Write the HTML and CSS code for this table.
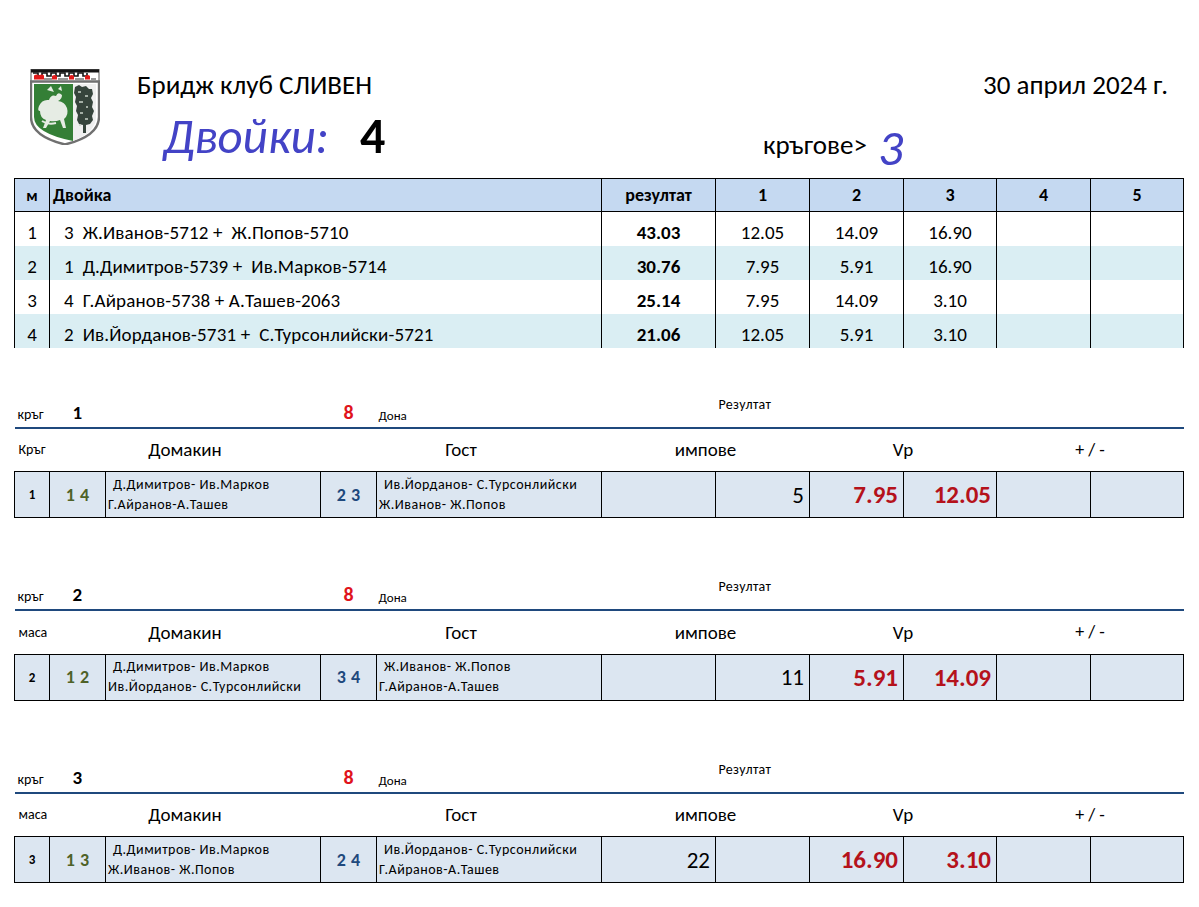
FILE: index.html
```html
<!DOCTYPE html>
<html lang="bg">
<head>
<meta charset="utf-8">
<title>Бридж клуб СЛИВЕН</title>
<link rel="stylesheet" href="styles.css">
</head>
<body>
<div class="page">
  <header class="header">
    <svg class="logo" viewBox="0 0 70 76" width="70" height="76">
      <rect x="1" y="0.5" width="68" height="12" fill="#fff" stroke="#555" stroke-width="1"/>
      <path d="M1 0.5 H69 V3.5 H1 Z" fill="#151515"/>
      <path d="M3 4 h5 v3 h4 v-3 h5 v3 h4 v-3 h5 v3 h4 v-3 h5 v3 h4 v-3 h5 v3 h4 v-3 h5 v3 h4 v-3" fill="none" stroke="#151515" stroke-width="1.6"/>
      <path d="M4 6.5 q3 -2 5 0 q3 -2 5 0 v4 h-10 z" fill="#e21b1b"/>
      <path d="M22 7 q3 -2 5 0 v3.5 h-5 z" fill="#e21b1b"/>
      <path d="M39 7 q3 -2 5 0 v3.5 h-5 z" fill="#e21b1b"/>
      <path d="M55 7 q3 -2 5 0 v3.5 h-5 z" fill="#e21b1b"/>
      <path d="M14 10 h8 M28 10 h10 M45 10 h9 M61 10 h5" stroke="#333" stroke-width="1.2"/>
      <path d="M1 12.5 H69 V48 Q69 67 35 75.5 Q1 67 1 48 Z" fill="#fff" stroke="#707070" stroke-width="2.4"/>
      <path d="M4 15 H43 V72 Q4 64 4 48 Z" fill="#347f36"/>
      <path d="M9 37 q3 -7 10 -6 q2 -6 7 -4 q2 -5 6 -1 q0 4 -4 6 q7 1 9 7 q2 7 -3 11 l2 9 h-3 l-3 -8 q-5 2 -10 1 l-4 7 h-3 l3 -8 q-6 -2 -6 -9 q-3 0 -1 -5 z" fill="#e6ece4"/>
      <path d="M17 21 l4 -4 l3 6 z M28 20 l3 -3 l1 5 z" fill="#e6ece4"/>
      <path d="M12 52 q6 4 14 2" stroke="#e6ece4" stroke-width="2" fill="none"/>
      <path d="M43 15 H66 V48 Q66 63 43 72 Z" fill="#efefef"/>
      <path d="M45 18 l4 -2 l3 2 l4 -1 l3 3 l3 0 l1 5 l-2 4 l2 4 l-1 5 l2 4 l-2 5 l1 4 l-3 4 l-4 1 v8 h-3 v-8 l-4 -1 l-2 -4 l1 -5 l-2 -4 l1 -5 l-2 -4 l1 -5 l-2 -4 z" fill="#36443c"/>
      <path d="M48 23 h3 M55 27 h3 M49 33 h4 M56 38 h2 M50 44 h3 M55 50 h3 M49 56 h2" stroke="#c9d2c9" stroke-width="1.4"/>
    </svg>
    <div class="titles">
      <div class="title-row">
        <span class="club">Бридж клуб СЛИВЕН</span>
        <span class="date">30 април 2024 г.</span>
      </div>
      <div class="count-row">
        <span class="pairs-label">Двойки:</span>
        <span class="pairs-num">4</span>
        <span class="rounds-label">кръгове&gt;</span>
        <span class="rounds-num">3</span>
      </div>
    </div>
  </header>

  <table class="standings">
    <colgroup>
      <col class="w35"><col class="w552"><col class="w114"><col class="w94"><col class="w94"><col class="w93"><col class="w94"><col class="w93">
    </colgroup>
    <thead>
      <tr><th class="c-m">м</th><th class="c-name">Двойка</th><th>резултат</th><th>1</th><th>2</th><th>3</th><th>4</th><th>5</th></tr>
    </thead>
    <tbody>
      <tr><td>1</td><td class="c-name">3  Ж.Иванов-5712 +  Ж.Попов-5710</td><td class="total">43.03</td><td>12.05</td><td>14.09</td><td>16.90</td><td></td><td></td></tr>
      <tr class="alt"><td>2</td><td class="c-name">1  Д.Димитров-5739 +  Ив.Марков-5714</td><td class="total">30.76</td><td>7.95</td><td>5.91</td><td>16.90</td><td></td><td></td></tr>
      <tr><td>3</td><td class="c-name">4  Г.Айранов-5738 + А.Ташев-2063</td><td class="total">25.14</td><td>7.95</td><td>14.09</td><td>3.10</td><td></td><td></td></tr>
      <tr class="alt"><td>4</td><td class="c-name">2  Ив.Йорданов-5731 +  С.Турсонлийски-5721</td><td class="total">21.06</td><td>12.05</td><td>5.91</td><td>3.10</td><td></td><td></td></tr>
    </tbody>
  </table>

  <table class="round">
    <colgroup>
      <col class="w35"><col class="w56"><col class="w215"><col class="w56"><col class="w225"><col class="w114"><col class="w94"><col class="w94"><col class="w93"><col class="w94"><col class="w93">
    </colgroup>
    <tr class="cap">
      <td class="cap-label">кръг</td><td class="cap-num">1</td><td></td><td class="boards">8</td><td class="cap-small">Дона</td><td></td><td class="cap-result">Резултат</td><td></td><td></td><td></td><td></td>
    </tr>
    <tr class="colhead">
      <td class="cap-label">Кръг</td><td colspan="2">Домакин</td><td colspan="2">Гост</td><td colspan="2">импове</td><td colspan="2">Vp</td><td colspan="2" class="pm">+ / -</td>
    </tr>
    <tr class="data">
      <td class="tbl">1</td><td class="home">1 4</td>
      <td class="names"><div class="ind">Д.Димитров- Ив.Марков</div><div>Г.Айранов-А.Ташев</div></td>
      <td class="guest">2 3</td>
      <td class="names"><div class="ind">Ив.Йорданов- С.Турсонлийски</div><div>Ж.Иванов- Ж.Попов</div></td>
      <td class="imp"></td><td class="imp">5</td><td class="vp">7.95</td><td class="vp">12.05</td><td></td><td></td>
    </tr>
  </table>

  <table class="round">
    <colgroup>
      <col class="w35"><col class="w56"><col class="w215"><col class="w56"><col class="w225"><col class="w114"><col class="w94"><col class="w94"><col class="w93"><col class="w94"><col class="w93">
    </colgroup>
    <tr class="cap">
      <td class="cap-label">кръг</td><td class="cap-num">2</td><td></td><td class="boards">8</td><td class="cap-small">Дона</td><td></td><td class="cap-result">Резултат</td><td></td><td></td><td></td><td></td>
    </tr>
    <tr class="colhead">
      <td class="cap-label">маса</td><td colspan="2">Домакин</td><td colspan="2">Гост</td><td colspan="2">импове</td><td colspan="2">Vp</td><td colspan="2" class="pm">+ / -</td>
    </tr>
    <tr class="data">
      <td class="tbl">2</td><td class="home">1 2</td>
      <td class="names"><div class="ind">Д.Димитров- Ив.Марков</div><div>Ив.Йорданов- С.Турсонлийски</div></td>
      <td class="guest">3 4</td>
      <td class="names"><div class="ind">Ж.Иванов- Ж.Попов</div><div>Г.Айранов-А.Ташев</div></td>
      <td class="imp"></td><td class="imp">11</td><td class="vp">5.91</td><td class="vp">14.09</td><td></td><td></td>
    </tr>
  </table>

  <table class="round">
    <colgroup>
      <col class="w35"><col class="w56"><col class="w215"><col class="w56"><col class="w225"><col class="w114"><col class="w94"><col class="w94"><col class="w93"><col class="w94"><col class="w93">
    </colgroup>
    <tr class="cap">
      <td class="cap-label">кръг</td><td class="cap-num">3</td><td></td><td class="boards">8</td><td class="cap-small">Дона</td><td></td><td class="cap-result">Резултат</td><td></td><td></td><td></td><td></td>
    </tr>
    <tr class="colhead">
      <td class="cap-label">маса</td><td colspan="2">Домакин</td><td colspan="2">Гост</td><td colspan="2">импове</td><td colspan="2">Vp</td><td colspan="2" class="pm">+ / -</td>
    </tr>
    <tr class="data">
      <td class="tbl">3</td><td class="home">1 3</td>
      <td class="names"><div class="ind">Д.Димитров- Ив.Марков</div><div>Ж.Иванов- Ж.Попов</div></td>
      <td class="guest">2 4</td>
      <td class="names"><div class="ind">Ив.Йорданов- С.Турсонлийски</div><div>Г.Айранов-А.Ташев</div></td>
      <td class="imp">22</td><td class="imp"></td><td class="vp">16.90</td><td class="vp">3.10</td><td></td><td></td>
    </tr>
  </table>
</div>
</body>
</html>
```

FILE: styles.css
```css
* { box-sizing: border-box; }
html, body { margin: 0; padding: 0; background: #fff; }
body {
  font-family: "Carlito", "Open Sans", "Noto Sans", sans-serif;
  color: #000;
}
.page {
  width: 1199px;
  padding: 0 16px 0 14px;
}

/* Header */
.header {
  height: 178px;
  padding: 69px 0 0 16px;
  display: grid;
  grid-template-columns: 107px 1fr;
  align-items: start;
}
.logo { display: block; }
.titles { display: flex; flex-direction: column; }
.title-row {
  display: flex;
  justify-content: space-between;
  padding-right: 15px;
  height: 32px;
  align-items: center;
}
.club, .date { font-size: 27px; line-height: 32px; }
.count-row {
  display: flex;
  align-items: flex-start;
  margin-left: 26px;
  margin-top: 10px;
}
.pairs-label {
  width: 197px;
  font-size: 49px;
  font-style: italic;
  color: #4343c6;
  line-height: 50px;
  margin-top: 0;
}
.pairs-num {
  width: 403px;
  font-size: 50px;
  font-weight: bold;
  line-height: 50px;
  margin-top: 0;
}
.rounds-label {
  width: 115px;
  font-size: 27px;
  margin-top: 19px;
  line-height: 30px;
}
.rounds-num {
  font-size: 50px;
  font-style: italic;
  color: #4343c6;
  line-height: 50px;
  margin-top: 12px;
}

/* Tables shared */
table { border-collapse: collapse; table-layout: fixed; width: 1169px; }
.w35 { width: 35px; }
.w552 { width: 552px; }
.w114 { width: 114px; }
.w94 { width: 94px; }
.w93 { width: 93px; }
.w56 { width: 56px; }
.w215 { width: 215px; }
.w225 { width: 225px; }

/* Standings */
.standings th {
  background: #c5d9f1;
  border: 1px solid #000;
  height: 33px;
  font-size: 18px;
  font-weight: bold;
  text-align: center;
  padding: 0;
}
.standings th.c-m { font-size: 16px; }
.standings th.c-name { text-align: left; padding-left: 3px; }
.standings td {
  height: 34px;
  border-left: 1px solid #000;
  border-right: 1px solid #000;
  font-size: 19px;
  text-align: center;
  padding: 8px 0 0;
  white-space: pre;
}
.standings tr.alt td { background: #daeef3; }
.standings td.c-name { text-align: left; padding-left: 14px; letter-spacing: 0.15px; }
.standings td.total { font-weight: bold; }

/* Rounds */
.round { margin-top: 48px; }
.round + .round { margin-top: 60px; }
.round td { padding: 0; white-space: nowrap; }
.round tr.cap td {
  height: 31px;
  border-bottom: 2px solid #1f497d;
  vertical-align: bottom;
  padding-bottom: 4px;
  font-size: 14px;
}
.round td.cap-label { font-size: 14px; padding-left: 3px; }
.round tr.cap td.cap-num { font-size: 19px; font-weight: bold; padding-left: 23px; padding-bottom: 3px; }
.round tr.cap td.boards { font-size: 20px; font-weight: bold; color: #e0141c; text-align: center; padding-bottom: 3px; }
.round tr.cap td.cap-small { font-size: 13px; padding-left: 2px; padding-bottom: 4px; }
.round tr.cap td.cap-result { font-size: 14px; padding-left: 3px; padding-bottom: 14px; letter-spacing: 0.3px; }
.round tr.colhead td {
  height: 44px;
  text-align: center;
  font-size: 19px;
  vertical-align: middle;
}
.round tr.colhead td.cap-label { text-align: left; font-size: 14px; padding-left: 4px; }
.round tr.colhead td.pm { font-size: 18px; }
.round tr.data td {
  height: 46px;
  background: #dce6f1;
  border: 1px solid #000;
  vertical-align: middle;
}
.round td.tbl { text-align: center; font-size: 13px; font-weight: bold; }
.round td.home, .round td.guest { text-align: center; font-size: 18px; font-weight: bold; word-spacing: 1px; }
.round td.home { color: #4f6228; }
.round td.guest { color: #1f497d; }
.round td.names {
  font-size: 14px;
  letter-spacing: 0.5px;
  line-height: 20px;
  padding: 0 0 0 2px;
}
.round td.names .ind { padding-left: 5px; }
.round td.imp { text-align: right; font-size: 23px; padding-right: 5px; }
.round td.vp { text-align: right; font-size: 25px; font-weight: bold; color: #b5121b; padding-right: 5px; }
```
